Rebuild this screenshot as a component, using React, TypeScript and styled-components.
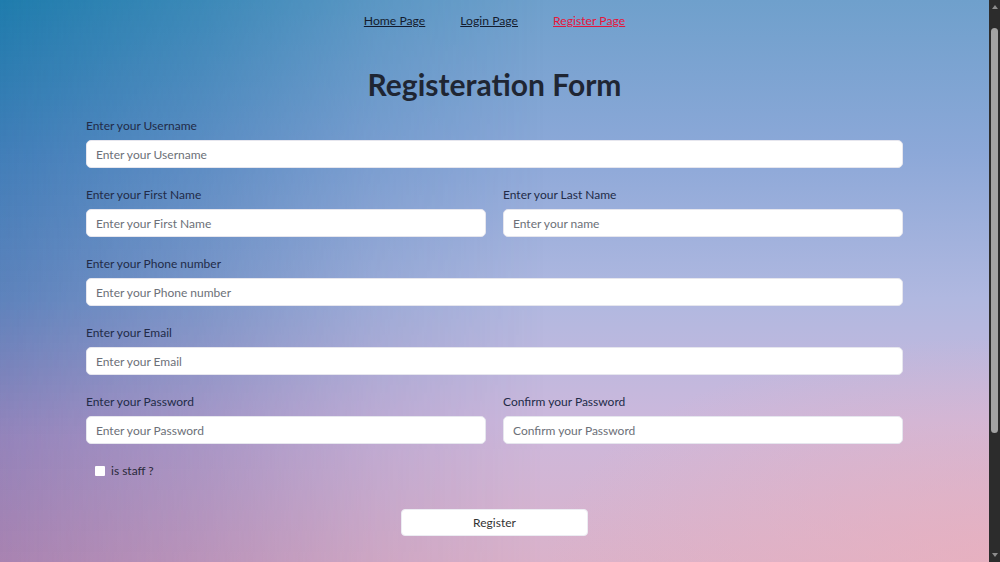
import React from "react";
import styled, { createGlobalStyle } from "styled-components";

const GlobalStyle = createGlobalStyle`
  html, body {
    margin: 0;
    padding: 0;
    overflow: hidden;
  }
  body {
    font-family: Lato, "Noto Sans", sans-serif;
    color: #1f2a44;
  }
`;

const Viewport = styled.div`
  display: flex;
  height: 100vh;
  overflow: hidden;
`;

const Main = styled.main`
  flex: 1;
  min-width: 0;
  overflow: hidden;
  position: relative;
  isolation: isolate;
  background:
    radial-gradient(ellipse 45% 40% at 100% 100%, rgba(236, 176, 188, 0.7), rgba(236, 176, 188, 0)),
    linear-gradient(to bottom, #6fa0cc 0%, #8ca8d8 27%, #b0b8e0 53%, #ccb8dc 75%, #dab2ca 100%);

  /* darker tint that runs down the left side: teal at the top, mauve at the bottom */
  &::before {
    content: "";
    position: absolute;
    inset: 0;
    z-index: -1;
    background: linear-gradient(
      to bottom,
      rgba(0, 110, 160, 0.72) 0%,
      rgba(20, 100, 165, 0.62) 28%,
      rgba(31, 90, 160, 0.57) 53%,
      rgba(90, 80, 155, 0.5) 78%,
      rgba(115, 80, 150, 0.48) 100%
    );
    -webkit-mask-image: linear-gradient(to right, #000 0%, rgba(0, 0, 0, 0.65) 20%, rgba(0, 0, 0, 0.25) 38%, transparent 55%);
    mask-image: linear-gradient(to right, #000 0%, rgba(0, 0, 0, 0.65) 20%, rgba(0, 0, 0, 0.25) 38%, transparent 55%);
  }
`;

/* fake browser scrollbar on the right edge */
const ScrollBar = styled.div`
  width: 11px;
  flex-shrink: 0;
  background: #2c2c2c;
  display: flex;
  flex-direction: column;
  align-items: center;
`;

const Arrow = styled.div<{ $down?: boolean }>`
  width: 0;
  height: 0;
  margin: ${(p) => (p.$down ? "auto 0 5px" : "5px 0 0")};
  border-left: 3px solid transparent;
  border-right: 3px solid transparent;
  ${(p) => (p.$down ? "border-top: 4px solid #8d8d8d;" : "border-bottom: 4px solid #8d8d8d;")}
`;

const Thumb = styled.div`
  width: 7px;
  height: 405px;
  margin-top: 19px;
  border-radius: 4px;
  background: #a3a3a3;
`;

const Nav = styled.nav`
  display: flex;
  justify-content: center;
  gap: 35px;
  padding: 12px 0;
  line-height: 18px;
`;

const NavLink = styled.a<{ $active?: boolean }>`
  font-size: 12.2px;
  color: ${(p) => (p.$active ? "#e5173c" : "#141c2e")};
  text-decoration: underline;
  cursor: pointer;
`;

const Title = styled.h1`
  margin: 24px 0 16px;
  text-align: center;
  font-size: 30px;
  line-height: 36px;
  font-weight: 700;
  color: #1f2633;
`;

const Form = styled.form`
  width: 817px;
  margin: 0 auto;
  display: flex;
  flex-direction: column;
  gap: 19px;
`;

const Row = styled.div`
  display: grid;
  grid-template-columns: 1fr 1fr;
  column-gap: 17px;
`;

const Field = styled.div`
  display: flex;
  flex-direction: column;
  gap: 6px;
`;

const Label = styled.label`
  font-size: 12px;
  line-height: 16px;
  color: #222b48;
`;

const Input = styled.input`
  height: 28px;
  box-sizing: border-box;
  border: 1px solid #e6e6ee;
  border-radius: 5px;
  background: #fff;
  padding: 0 9px;
  font-family: inherit;
  font-size: 12px;
  color: #333;
  outline: none;
  &::placeholder {
    color: #6c7078;
  }
`;

const CheckRow = styled.div`
  display: flex;
  align-items: center;
  gap: 6px;
  padding-left: 9px;
  line-height: 16px;
`;

const Check = styled.input`
  appearance: none;
  width: 10px;
  height: 10px;
  margin: 0;
  background: #fff;
  border: none;
  border-radius: 1px;
`;

const CheckLabel = styled.label`
  font-size: 12px;
  color: #2a2a3a;
`;

const ButtonRow = styled.div`
  display: flex;
  justify-content: center;
  margin-top: 11px;
`;

const Button = styled.button`
  width: 187px;
  height: 27px;
  background: #fff;
  border: 1px solid #ececf2;
  border-radius: 4px;
  font-family: inherit;
  font-size: 12px;
  color: #333;
  cursor: pointer;
`;

const App = () => {
  return (
    <Viewport>
      <GlobalStyle />
      <Main>
        <Nav>
          <NavLink>Home Page</NavLink>
          <NavLink>Login Page</NavLink>
          <NavLink $active>Register Page</NavLink>
        </Nav>
        <Title>Registeration Form</Title>
        <Form onSubmit={(e) => e.preventDefault()}>
          <Field>
            <Label>Enter your Username</Label>
            <Input placeholder="Enter your Username" />
          </Field>
          <Row>
            <Field>
              <Label>Enter your First Name</Label>
              <Input placeholder="Enter your First Name" />
            </Field>
            <Field>
              <Label>Enter your Last Name</Label>
              <Input placeholder="Enter your name" />
            </Field>
          </Row>
          <Field>
            <Label>Enter your Phone number</Label>
            <Input placeholder="Enter your Phone number" />
          </Field>
          <Field>
            <Label>Enter your Email</Label>
            <Input placeholder="Enter your Email" />
          </Field>
          <Row>
            <Field>
              <Label>Enter your Password</Label>
              <Input type="password" placeholder="Enter your Password" />
            </Field>
            <Field>
              <Label>Confirm your Password</Label>
              <Input type="password" placeholder="Confirm your Password" />
            </Field>
          </Row>
          <CheckRow>
            <Check type="checkbox" id="staff" />
            <CheckLabel htmlFor="staff">is staff ?</CheckLabel>
          </CheckRow>
          <ButtonRow>
            <Button type="submit">Register</Button>
          </ButtonRow>
        </Form>
      </Main>
      <ScrollBar>
        <Arrow />
        <Thumb />
        <Arrow $down />
      </ScrollBar>
    </Viewport>
  );
};

export default App;
